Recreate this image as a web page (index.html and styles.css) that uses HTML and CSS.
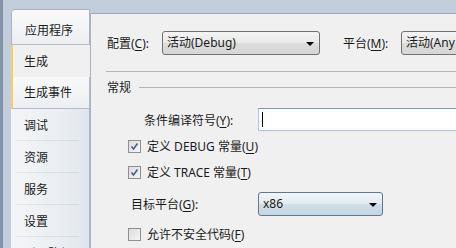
FILE: index.html
```html
<!DOCTYPE html>
<html lang="zh-CN">
<head>
  <meta charset="UTF-8">
  <title>项目属性</title>
  <link rel="stylesheet" href="styles.css">
</head>
<body>
  <div class="frame">
    <div class="tabs">
      <div class="tab first">应用程序</div>
      <div class="tab active">生成</div>
      <div class="tab hover">生成事件</div>
      <div class="item">调试</div>
      <div class="item">资源</div>
      <div class="item">服务</div>
      <div class="item">设置</div>
      <div class="item">引用路径</div>
    </div>

    <div class="panel">
      <div class="row config">
        <span class="label">配置(<u>C</u>):</span>
        <div class="combo grey w158">活动(Debug)<span class="arrow"></span></div>
        <span class="label plat">平台(<u>M</u>):</span>
        <div class="combo grey wide">活动(Any CPU)<span class="arrow"></span></div>
      </div>
      <div class="sep"></div>

      <div class="section"><span>常规</span><div class="line"></div></div>

      <div class="row symbols">
        <span class="label">条件编译符号(<u>Y</u>):</span>
        <div class="textbox"><span class="caret"></span></div>
      </div>

      <div class="row check first-check">
        <span class="box"><svg width="13" height="13" viewBox="0 0 13 13"><path d="M3.5 6.5 L5.5 9 L9.5 3.5" fill="none" stroke="#4a5f8c" stroke-width="1.6"/></svg></span>
        <span>定义 DEBUG 常量(<u>U</u>)</span>
      </div>
      <div class="row check">
        <span class="box"><svg width="13" height="13" viewBox="0 0 13 13"><path d="M3.5 6.5 L5.5 9 L9.5 3.5" fill="none" stroke="#4a5f8c" stroke-width="1.6"/></svg></span>
        <span>定义 TRACE 常量(<u>T</u>)</span>
      </div>

      <div class="row target">
        <span class="label">目标平台(<u>G</u>):</span>
        <div class="combo blue w125">x86<span class="arrow"></span></div>
      </div>

      <div class="row check">
        <span class="box"></span>
        <span>允许不安全代码(<u>F</u>)</span>
      </div>
    </div>
  </div>
</body>
</html>
```

FILE: styles.css
```css
html, body {
  margin: 0;
  padding: 0;
  overflow: hidden;
}

body {
  font-family: "Noto Sans", "Noto Sans CJK SC", sans-serif;
  font-size: 12px;
  color: #1b1b1b;
}

u {
  text-decoration: underline;
  text-underline-offset: 2px;
}

.frame {
  display: flex;
  height: 248px;
  padding: 9px 0 0 8px;
  background: #c3cedc;
  border-left: 3px solid #8494ab;
  box-sizing: border-box;
  overflow: hidden;
}

/* left tab column */
.tabs {
  width: 79px;
  flex-shrink: 0;
  display: flex;
  flex-direction: column;
  background: linear-gradient(to right, #f4f5f7, #e9edf1 70%, #dfe5ec);
  border-radius: 4px 0 0 0;
}

.tab, .item {
  height: 32px;
  line-height: 34px;
  padding-left: 13px;
  box-sizing: border-box;
  flex-shrink: 0;
}

.tab.first {
  height: 36px;
  line-height: 42px;
  background: linear-gradient(#fafafa, #eceef1);
  border: 1px solid #a9b3c1;
  border-radius: 4px 0 0 0;
  border-bottom-color: #b6bec9;
}

.tab.active {
  background: #f0f0f0;
  border-left: 2px solid #f3cf6d;
  padding-left: 11px;
  position: relative;
  z-index: 1;
}

.tab.hover {
  height: 32px;
  line-height: 32px;
  background: linear-gradient(#f9f9f9, #eceef1);
  border: 1px solid #b3bcc8;
  border-left: 2px solid #f3cf6d;
  border-top: none;
  padding-left: 11px;
}

.item {
  position: relative;
  border-right: 1px solid #a9b5c5;
}

.item::after {
  content: "";
  position: absolute;
  left: 5px;
  right: 10px;
  bottom: 0;
  height: 1px;
  background: linear-gradient(to right, #e4e7eb, #d2d8df);
}

/* right panel */
.panel {
  flex: 1;
  margin-top: 4px;
  background: #f0f0f0;
  border-top: 1px solid #9ea9b8;
  border-left: 1px solid #a9b5c5;
  padding: 17px 0 0 16px;
  display: flex;
  flex-direction: column;
  min-width: 0;
  overflow: hidden;
}

.row {
  display: flex;
  align-items: center;
  white-space: nowrap;
  flex-shrink: 0;
}

.label {
  flex-shrink: 0;
}

.config {
  height: 24px;
}

.config .label {
  width: 55px;
}

.config .plat {
  width: 58px;
  margin-left: 23px;
}

.combo {
  position: relative;
  height: 24px;
  line-height: 22px;
  box-sizing: border-box;
  padding-left: 4px;
  border-radius: 3px;
  flex-shrink: 0;
}

.combo.grey {
  border: 1px solid #717171;
  background: linear-gradient(#f4f4f4, #e9e9e9 50%, #dcdcdc 51%, #d6d6d6);
}

.combo.blue {
  border: 1px solid #5b7994;
  background: linear-gradient(#f1f5f8, #e2ebf1 50%, #d0dee8 51%, #c5d6e2);
}

.w158 { width: 158px; }
.w125 { width: 125px; }
.wide { width: 120px; }

.arrow {
  position: absolute;
  right: 5px;
  top: 10px;
  border-left: 4px solid transparent;
  border-right: 4px solid transparent;
  border-top: 4px solid #000;
}

.sep {
  height: 1px;
  background: #b4b4b4;
  margin: 16px 0 0 -1px;
  flex-shrink: 0;
}

.section {
  display: flex;
  align-items: center;
  height: 30px;
  flex-shrink: 0;
}

.section .line {
  flex: 1;
  height: 1px;
  background: #b4b4b4;
  margin-left: 8px;
}

.symbols {
  height: 23px;
  margin-top: 6px;
}

.symbols .label {
  margin-left: 37px;
  width: 114px;
}

.textbox {
  flex: 1;
  height: 23px;
  box-sizing: border-box;
  background: #fff;
  border: 1px solid #a6c8e8;
  border-top-color: #6d9ccb;
  border-right: none;
  position: relative;
}

.caret {
  position: absolute;
  left: 3px;
  top: 3px;
  width: 1px;
  height: 15px;
  background: #000;
}

.check {
  height: 26px;
  margin-left: 21px;
  gap: 6px;
}

.first-check {
  margin-top: 2px;
}

.box {
  width: 13px;
  height: 13px;
  box-sizing: border-box;
  border: 1px solid #8f8f8f;
  background: linear-gradient(135deg, #dcdcdc, #f6f6f6);
  display: flex;
  flex-shrink: 0;
}

.box svg {
  margin: -1px;
}

.target {
  height: 23px;
  margin: 7px 0 6px 24px;
}

.target .label {
  width: 127px;
}
```
